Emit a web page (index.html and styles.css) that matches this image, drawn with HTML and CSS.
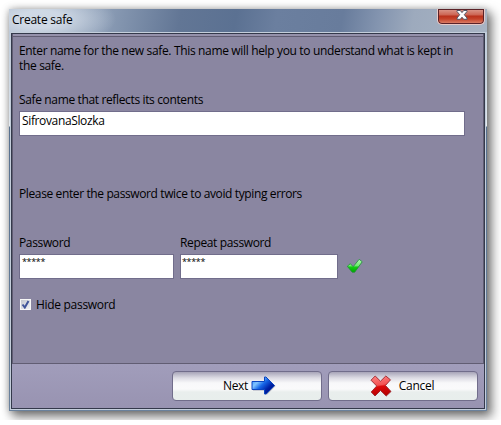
FILE: index.html
```
<!DOCTYPE html>
<html lang="en">
<head>
    <meta charset="UTF-8">
    <title>Create safe</title>
    <link rel="stylesheet" href="styles.css">
</head>
<body>
    <div class="window">
        <div class="titlebar">
            <span class="title">Create safe</span>
            <button type="button" class="close" aria-label="Close">
                <svg width="12" height="10" viewBox="0 0 12 10">
                    <path d="M1 .5h3.300L6 2.600 7.700.5H11v1L8.300 4.700 11 8v1.300H7.700L6 7.200 4.300 9.300H1V8l2.700-3.300L1 1.500z" fill="#fff" stroke="#535666" stroke-width="1"/>
                </svg>
            </button>
        </div>
        <div class="client">
            <form class="panel">
                <p class="intro">Enter name for the new safe. This name will help you to understand what is kept in<br>the safe.</p>
                <label class="name-label" for="safeName">Safe name that reflects its contents</label>
                <input type="text" class="field" id="safeName" value="SifrovanaSlozka">
                <p class="hint">Please enter the password twice to avoid typing errors</p>
                <div class="passwords">
                    <div class="password">
                        <label for="password">Password</label>
                        <input type="text" class="field stars" id="password" value="*****">
                    </div>
                    <div class="password repeat">
                        <label for="repeat">Repeat password</label>
                        <input type="text" class="field stars" id="repeat" value="*****">
                    </div>
                    <svg class="valid" width="18" height="16" viewBox="0 0 18 16">
                        <defs>
                            <linearGradient id="green" x1="0" y1="0" x2="0" y2="1">
                                <stop offset="0" stop-color="#b5f5b5"/>
                                <stop offset=".5" stop-color="#6cec6c"/>
                                <stop offset=".6" stop-color="#12cc12"/>
                                <stop offset="1" stop-color="#00a800"/>
                            </linearGradient>
                        </defs>
                        <path d="M1.300 8.300L4.300 5.700l2.900 3L13.200 1.300l3 2.500-7.500 10.400H6.200z" fill="url(#green)" stroke="#1f8f38" stroke-width=".8" stroke-linejoin="round"/>
                    </svg>
                </div>
                <div class="hide">
                    <span class="checkbox">
                        <svg width="9" height="9" viewBox="0 0 9 9">
                            <path d="M1.500 4.500L3.800 7.500 7.500 1" fill="none" stroke="#40559a" stroke-width="2"/>
                        </svg>
                    </span>
                    <span class="hide-label">Hide password</span>
                </div>
            </form>
            <div class="footer">
                <button type="button" class="btn next">
                    <span>Next</span>
                    <svg width="26" height="20" viewBox="0 0 26 20">
                        <defs>
                            <linearGradient id="blue" x1="0" y1="0" x2="1" y2=".8">
                                <stop offset="0" stop-color="#2d88ff"/>
                                <stop offset=".3" stop-color="#80c4ff"/>
                                <stop offset=".5" stop-color="#1767e8"/>
                                <stop offset=".75" stop-color="#0022a8"/>
                                <stop offset="1" stop-color="#000c70"/>
                            </linearGradient>
                        </defs>
                        <path d="M2 6.500h12.500V2h1.500l8.500 8-8.500 8.500h-1.500V14.500H2z" fill="#55557a" opacity=".5"/>
                        <path d="M1 5.500h12.500V1H15l8.500 8.500L15 18h-1.500v-4.500H1z" fill="url(#blue)" stroke="#0a44c0" stroke-width="1" stroke-linejoin="round"/>
                    </svg>
                </button>
                <button type="button" class="btn cancel">
                    <svg width="22" height="22" viewBox="0 0 22 22">
                        <defs>
                            <linearGradient id="red" x1="0" y1="0" x2=".15" y2="1">
                                <stop offset="0" stop-color="#ff8585"/>
                                <stop offset=".5" stop-color="#f35252"/>
                                <stop offset=".58" stop-color="#dc0a0a"/>
                                <stop offset="1" stop-color="#b80000"/>
                            </linearGradient>
                        </defs>
                        <path d="M1 5.200L5.200 1l5.300 5.200L15.800 1l4.700 3.800-5 5.700 5.500 6-4.800 4.500-5.700-5.500-5.500 5.500L1.200 17l5.500-6z" fill="url(#red)" stroke="#98252b" stroke-width=".9" stroke-linejoin="round"/>
                    </svg>
                    <span>Cancel</span>
                </button>
            </div>
        </div>
    </div>
</body>
</html>
```

FILE: styles.css
```
body {
    margin: 0;
    padding: 9px;
    background: #fff;
    font-family: "Open Sans", "Noto Sans", sans-serif;
    font-size: 12px;
    line-height: 15px;
    letter-spacing: -0.36px;
    color: #000;
    overflow: hidden;
}
p {
    margin: 0;
}
label, span, p {
    white-space: nowrap;
}
.window {
    box-sizing: border-box;
    width: 478px;
    height: 402px;
    padding: 0 1px 1px;
    background: linear-gradient(#b4c3d4 0, #dce4ec 110px, #e8eef3 117px, #58718f 118px, #6a819c 100%);
    box-shadow: 4px 5px 10px 1px rgba(0, 0, 0, 0.5), 0 0 7px rgba(0, 0, 0, 0.25);
}
/* glass title bar */
.titlebar {
    display: flex;
    justify-content: space-between;
    height: 23px;
    margin: 0 -1px;
    background:
        radial-gradient(ellipse 75px 28px at 32px 10px, rgba(215, 224, 235, 0.85) 30%, rgba(215, 224, 235, 0) 100%),
        linear-gradient(100deg, #a9b7c9 0, #8fa0b8 90px, #627695 170px, #5b7192 225px, #6b7f9f 265px, #687c9c 330px, #8394af 365px, #9daabd 400px, #a8b4c4 100%);
}
.title {
    padding: 3px 0 0 3px;
    letter-spacing: -0.25px;
}
.close {
    display: flex;
    justify-content: center;
    align-items: center;
    box-sizing: border-box;
    width: 48px;
    height: 16px;
    margin-right: 2px;
    padding: 0 0 4px 2px;
    border: 1px solid #e9c9c6;
    border-top: 0;
    border-radius: 0 0 5px 5px;
    background: linear-gradient(#dc9a8e 0, #cc6452 6px, #b9301b 7px, #c4432a 10px, #e08a74 100%);
    box-shadow: inset 0 0 0 1px #5b2228;
}
.client {
    box-sizing: border-box;
    height: 378px;
    border: 1px solid #c4cedb;
    background: #34394b;
    padding: 1px;
}
.panel {
    box-sizing: border-box;
    height: 330px;
    border: 1px solid #615d73;
    border-top: 0;
    box-shadow: inset 0 2px 0 #9591ab, inset 0 3px 0 #615d73;
    background: #8a86a1;
    padding: 9px 0 0 6px;
}
.panel label {
    display: block;
}
.intro {
    letter-spacing: -0.34px;
}
.name-label {
    margin-top: 19px;
}
.field {
    display: block;
    box-sizing: border-box;
    width: 446px;
    height: 25px;
    margin-top: 4px;
    padding: 0 2px 7px;
    border: 1px solid #716d8b;
    background: #fff;
    font: inherit;
    letter-spacing: inherit;
}
.hint {
    margin-top: 50px;
    letter-spacing: -0.38px;
}
.passwords {
    display: flex;
    margin-top: 34px;
}
.password {
    width: 161px;
}
.password .field {
    width: 155px;
}
.repeat .field {
    width: 158px;
}
.password .stars {
    padding: 0 1px 10px 2px;
    font-size: 9px;
}
.repeat .stars {
    padding-left: 1px;
}
.valid {
    margin: 23px 0 0 5px;
}
.hide {
    display: flex;
    margin-top: 18px;
}
.checkbox {
    display: flex;
    justify-content: center;
    align-items: center;
    box-sizing: border-box;
    width: 11px;
    height: 11px;
    margin: 2px 5px 0 1px;
    border: 1px solid #f7f7f7;
    background: linear-gradient(135deg, #c2c6ce, #f0f2f4);
}
.hide-label {
    letter-spacing: -0.3px;
}
.footer {
    display: flex;
    justify-content: flex-end;
    gap: 6px;
    box-sizing: border-box;
    height: 44px;
    padding: 7px 6px;
    background: linear-gradient(#a19dbb, #9893b1);
}
.btn {
    display: flex;
    justify-content: center;
    align-items: center;
    box-sizing: border-box;
    width: 150px;
    height: 30px;
    padding: 0 0 1px;
    border: 1px solid #716d8b;
    border-radius: 4px;
    background: linear-gradient(#a7a4b8 0, #dddce4 6px, #f8f8fa 11px, #fafafb 17px, #e9eeed 20px, #e8eeec 100%);
    font: inherit;
    letter-spacing: -0.3px;
    color: #000;
}
.next {
    gap: 3px;
    padding-left: 6px;
}
.cancel {
    gap: 7px;
    padding-right: 2px;
}
```
